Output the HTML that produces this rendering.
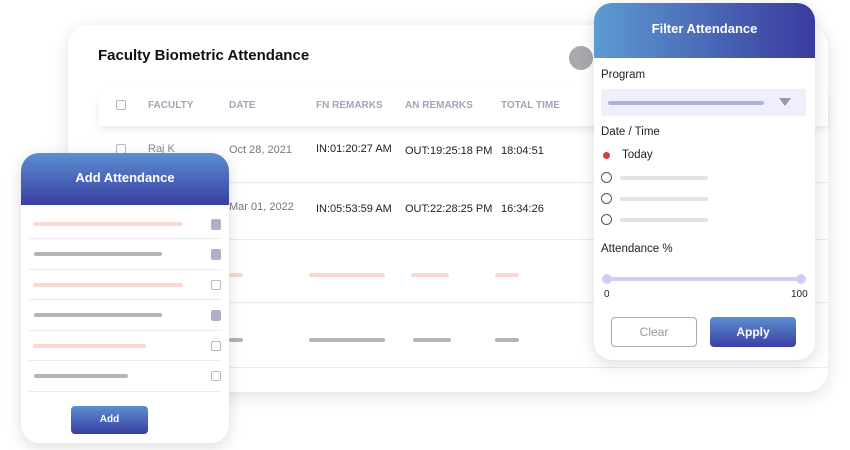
<!DOCTYPE html>
<html><head><style>
*{margin:0;padding:0;box-sizing:border-box}
body{width:850px;height:450px;background:#fff;position:relative;overflow:hidden;font-family:"Liberation Sans",sans-serif}
.abs{position:absolute}
.outer{left:68px;top:25px;width:760px;height:367px;background:#fff;border-radius:22px;box-shadow:0 4px 18px rgba(0,0,0,.12)}
.hdr{left:99px;top:86px;width:729px;height:40px;background:#fff;border-radius:14px 14px 0 0;box-shadow:0 4px 8px rgba(0,0,0,.08)}
.th{font-size:10px;font-weight:bold;color:#a4a4b8;top:100px}
.td{font-size:11px;color:#222;}
.line{height:1px;background:#ececf0}
.bar{height:4px;border-radius:2px}
.pk{background:#fbd9d0}.gr{background:#b3b3b8}
.cb{width:10px;height:10px;border:1px solid #b8b8c0;border-radius:2px;background:#fff}
.cbf{width:10px;height:11px;border-radius:2px;background:#b0aec8}
.card{background:#fff;border-radius:18px;box-shadow:0 4px 16px rgba(0,0,0,.14);overflow:hidden}
.grad{background:linear-gradient(#5b8fd0,#3a3ea3);color:#fff;font-weight:bold;font-size:13px;text-align:center}
.lbl{font-size:11.5px;color:#222;left:601px}
.radio{width:11px;height:11px;border:1px solid #555;border-radius:50%;left:601px}
</style></head><body>
<div class="abs outer"></div>
<div class="abs" style="left:98px;top:47px;font-size:15px;font-weight:bold;color:#111">Faculty Biometric Attendance</div>
<div class="abs" style="left:569px;top:46px;width:24px;height:24px;border-radius:50%;background:#a8a8ae"></div>
<div class="abs hdr"></div>
<div class="abs cb" style="left:116px;top:100px"></div>
<div class="abs th" style="left:148px">FACULTY</div>
<div class="abs th" style="left:229px">DATE</div>
<div class="abs th" style="left:316px">FN REMARKS</div>
<div class="abs th" style="left:405px">AN REMARKS</div>
<div class="abs th" style="left:501px">TOTAL TIME</div>
<div class="abs cb" style="left:116px;top:144px"></div>
<div class="abs td" style="left:148px;top:143px;color:#888">Raj K</div>
<div class="abs td" style="left:229px;top:144px;color:#777">Oct 28, 2021</div>
<div class="abs td" style="left:316px;top:143px">IN:01:20:27 AM</div>
<div class="abs td" style="left:405px;top:145px">OUT:19:25:18 PM</div>
<div class="abs td" style="left:501px;top:145px">18:04:51</div>
<div class="abs line" style="left:99px;top:182px;width:729px"></div>
<div class="abs td" style="left:229px;top:201px;color:#777">Mar 01, 2022</div>
<div class="abs td" style="left:316px;top:203px">IN:05:53:59 AM</div>
<div class="abs td" style="left:405px;top:203px">OUT:22:28:25 PM</div>
<div class="abs td" style="left:501px;top:203px">16:34:26</div>
<div class="abs line" style="left:99px;top:239px;width:729px"></div>
<div class="abs bar pk" style="left:229px;top:273px;width:14px"></div>
<div class="abs bar pk" style="left:309px;top:273px;width:76px"></div>
<div class="abs bar pk" style="left:411px;top:273px;width:38px"></div>
<div class="abs bar pk" style="left:495px;top:273px;width:24px"></div>
<div class="abs line" style="left:99px;top:302px;width:729px"></div>
<div class="abs bar gr" style="left:229px;top:338px;width:14px"></div>
<div class="abs bar gr" style="left:309px;top:338px;width:76px"></div>
<div class="abs bar gr" style="left:413px;top:338px;width:38px"></div>
<div class="abs bar gr" style="left:495px;top:338px;width:24px"></div>
<div class="abs line" style="left:99px;top:367px;width:729px"></div>

<div class="abs card" style="left:21px;top:153px;width:208px;height:290px">
 <div class="grad" style="height:52px;line-height:50px">Add Attendance</div>
</div>
<div class="abs bar pk" style="left:33px;top:222px;width:150px"></div>
<div class="abs cbf" style="left:211px;top:219px"></div>
<div class="abs line" style="left:28px;top:238px;width:194px"></div>
<div class="abs bar gr" style="left:34px;top:252px;width:128px"></div>
<div class="abs cbf" style="left:211px;top:249px"></div>
<div class="abs line" style="left:28px;top:269px;width:194px"></div>
<div class="abs bar pk" style="left:33px;top:283px;width:150px"></div>
<div class="abs cb" style="left:211px;top:280px"></div>
<div class="abs line" style="left:28px;top:299px;width:194px"></div>
<div class="abs bar gr" style="left:34px;top:313px;width:128px"></div>
<div class="abs cbf" style="left:211px;top:310px"></div>
<div class="abs line" style="left:28px;top:330px;width:194px"></div>
<div class="abs bar pk" style="left:33px;top:344px;width:113px"></div>
<div class="abs cb" style="left:211px;top:341px"></div>
<div class="abs line" style="left:28px;top:360px;width:194px"></div>
<div class="abs bar gr" style="left:34px;top:374px;width:94px"></div>
<div class="abs cb" style="left:211px;top:371px"></div>
<div class="abs line" style="left:28px;top:391px;width:194px"></div>
<div class="abs grad" style="left:71px;top:406px;width:77px;height:28px;line-height:27px;border-radius:4px;font-size:10px">Add</div>

<div class="abs card" style="left:594px;top:3px;width:221px;height:357px">
 <div style="height:55px;line-height:52px;background:linear-gradient(90deg,#5c9bd2,#3a3a9e);color:#fff;font-weight:bold;font-size:13px;text-align:center">Filter Attendance</div>
</div>
<div class="abs lbl" style="top:69px">Program</div>
<div class="abs" style="left:601px;top:89px;width:205px;height:27px;background:#eeeefc;border-radius:3px"></div>
<div class="abs bar" style="left:608px;top:101px;width:156px;background:#b4b2d4"></div>
<div class="abs" style="left:779px;top:98px;width:0;height:0;border-left:6px solid transparent;border-right:6px solid transparent;border-top:8px solid #9a9aa8"></div>
<div class="abs lbl" style="top:126px">Date / Time</div>
<div class="abs" style="left:603px;top:152px;width:7px;height:7px;border-radius:50%;background:#d04040"></div>
<div class="abs lbl" style="left:622px;top:149px">Today</div>
<div class="abs radio" style="top:172px"></div><div class="abs bar" style="left:620px;top:176px;width:88px;background:#e2e2e4"></div>
<div class="abs radio" style="top:193px"></div><div class="abs bar" style="left:620px;top:197px;width:88px;background:#e2e2e4"></div>
<div class="abs radio" style="top:214px"></div><div class="abs bar" style="left:620px;top:218px;width:88px;background:#e2e2e4"></div>
<div class="abs lbl" style="top:243px">Attendance %</div>
<div class="abs" style="left:606px;top:277px;width:195px;height:4px;background:#d0cdf6;border-radius:2px"></div>
<div class="abs" style="left:602px;top:274px;width:10px;height:10px;border-radius:50%;background:#d0cdf6"></div>
<div class="abs" style="left:796px;top:274px;width:10px;height:10px;border-radius:50%;background:#d0cdf6"></div>
<div class="abs" style="left:604px;top:289px;font-size:10px;color:#222">0</div>
<div class="abs" style="left:791px;top:289px;font-size:10px;color:#222">100</div>
<div class="abs" style="left:611px;top:317px;width:86px;height:30px;border:1px solid #aaa;border-radius:4px;text-align:center;line-height:28px;font-size:12px;color:#999">Clear</div>
<div class="abs grad" style="left:710px;top:317px;width:86px;height:30px;border-radius:4px;line-height:30px;font-size:12px">Apply</div>
</body></html>
